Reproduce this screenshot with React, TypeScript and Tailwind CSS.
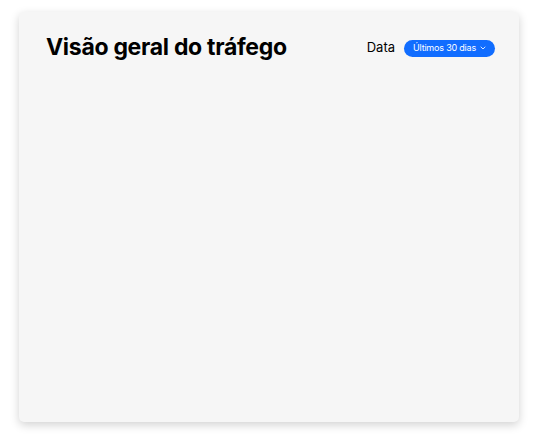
import { ChevronDown } from "lucide-react";

export default function App() {
  return (
    <div className="w-[534px] h-[443px] bg-white pt-[12px] pl-[19px]" style={{ fontFamily: "Inter, 'Noto Sans', sans-serif" }}>
      {/* card */}
      <div className="w-[500px] h-[410px] bg-[#f6f6f6] rounded-[5px] shadow-[0_3px_10px_rgba(0,0,0,0.18)] pl-[27px] pr-[24px] pt-[20px]">
        <header className="flex items-center justify-between">
          <h1 className="text-[23px] font-bold text-black tracking-[-0.3px] leading-[30px]">
            Visão geral do tráfego
          </h1>
          <div className="flex items-center gap-[9px] pt-[2px]">
            <span className="text-[13px] text-black">Data</span>
            <button className="h-[17px] pl-[9px] pr-[8px] rounded-full bg-[#116dff] text-white text-[9px] tracking-[-0.2px] flex items-center gap-[3px]">
              Últimos 30 dias
              <ChevronDown size={8} strokeWidth={2.5} />
            </button>
          </div>
        </header>
      </div>
    </div>
  );
}
